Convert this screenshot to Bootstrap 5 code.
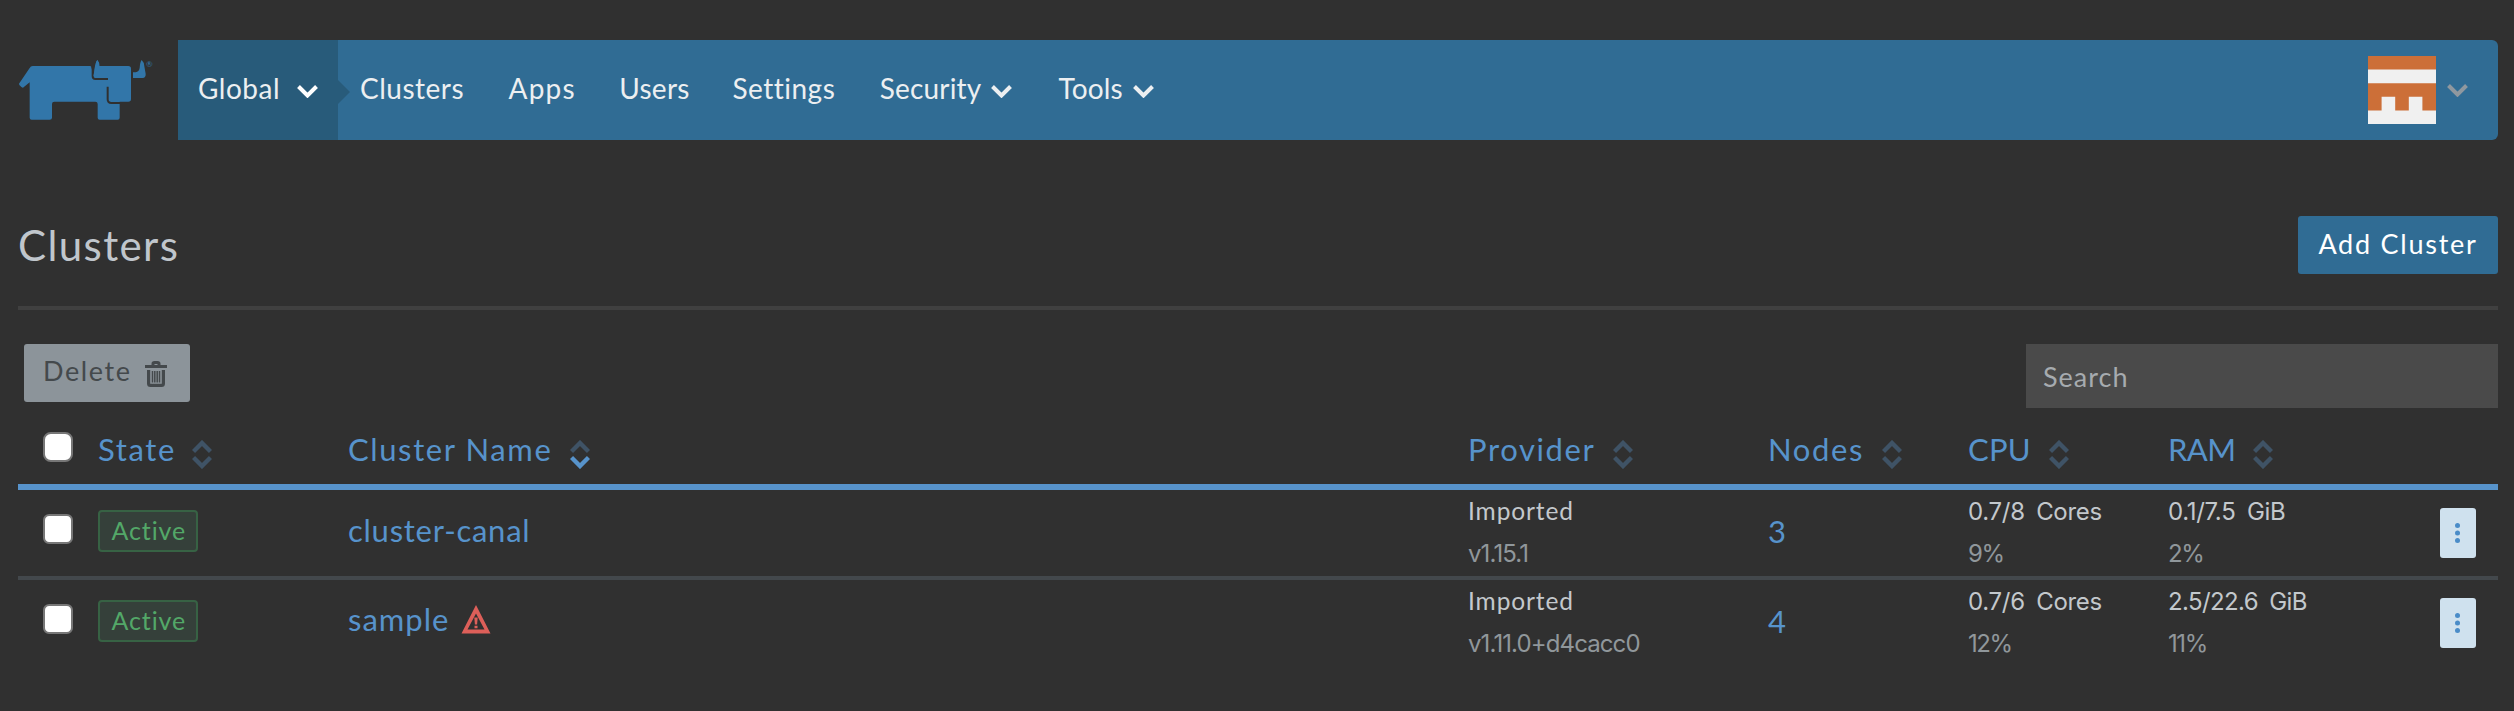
<!DOCTYPE html>
<html lang="en">
<head>
<meta charset="utf-8">
<meta name="viewport" content="width=device-width, initial-scale=1">
<title>Clusters</title>
<link href="https://cdn.jsdelivr.net/npm/bootstrap@5.3.0/dist/css/bootstrap.min.css" rel="stylesheet">
<style>
body{background:#303030;color:#c3c8cc;font-family:Lato,"Liberation Sans",sans-serif;font-size:24.5px;line-height:42px}
.page{padding:40px 16px 0 18px}
.topbar{height:100px}
.topbar .navbar{background:#306c94;border-radius:0 6px 6px 0;color:#eceff1;font-size:28px}
.scope{position:relative;width:160px;background:#285b7a;padding:0 20px 4px 20px}
.scope::after{content:"";position:absolute;left:100%;top:40px;border:12px solid transparent;border-left-color:#285b7a;border-right-width:0}
.menu{display:grid;grid-template-columns:148.6px 110.6px 113.2px 147.4px 178.7px 110px;margin-left:22px;padding-bottom:4px}
.menu a,.scope a{color:inherit;text-decoration:none;white-space:nowrap}
.chev{width:21px;height:13px;fill:none;stroke:currentColor;stroke-width:4}
.menu .chev{margin:0 0 1px 10px}
.scope .chev{margin-top:7px;color:#fff}
.user{padding-right:30px;gap:11px;color:#8f989f}
.ls5{letter-spacing:.5px}.ls12{letter-spacing:1.2px}.ls3{letter-spacing:.3px}.ls2{letter-spacing:.17px}.lsn{letter-spacing:-.6px}
.heading{padding-top:75px;height:170px;border-bottom:4px solid #404040}
.heading h1{font-size:42px;letter-spacing:1.4px;line-height:60px;color:#c0c6cc;font-weight:400;margin:0}
.btn{border:0;border-radius:3px;font-size:27px;line-height:42px;height:58px;padding:7px 20px 9px}
.btn-add,.btn-add:hover{background:#306c94;color:#fff;letter-spacing:1.75px;width:200px;margin-top:1px;padding-left:20px;white-space:nowrap}
.btn-del:disabled{background:#8c949a;color:#44494c;opacity:1;letter-spacing:1.6px;width:166px;padding:0 0 0 19px;margin-left:6px;text-align:left}
.btn-del span{padding-top:6px}
.btn-del svg{margin:17px 0 0 13px}
.search{width:472px;height:64px;background:#4a4a4a!important;border:0;border-radius:0;font-size:27px;padding:0 18px 0 17px;letter-spacing:1px}
.search::placeholder{color:#a6abaf}
.tools{margin-top:34px;height:64px}
.grid{table-layout:fixed;border-collapse:separate;border-spacing:0;margin:0;--bs-table-bg:transparent;--bs-table-color:#c3c8cc;color:#c3c8cc}
.grid>:not(caption)>*>*{padding:0;border:0 solid #43484c;background:none;vertical-align:top;color:inherit;box-shadow:none}
.grid>thead>tr>th{height:82px;border-bottom:6px solid #5793cb;font-weight:400;font-size:31px;color:#5793cb;letter-spacing:1.6px;white-space:nowrap}
.grid>tbody>tr>td{height:90px;border-bottom-width:4px;white-space:nowrap}
.grid>tbody>tr:last-child>td{border-bottom-color:transparent}
.cell{height:86px}
.grid th .cell{height:76px;padding-top:6px}
.sort{width:20px;height:29px;margin:11px 0 0 18px;fill:none;stroke:#3f5366;stroke-width:4.4}
.state-head .sort{margin-left:16px}
.sort .on{stroke:#5793cb}
.form-check-input{width:30px;height:30px;background-color:#fff;border:2px solid #777;border-radius:5px;margin:0 0 8px 25px;float:none;flex:none}
.grid th .form-check-input{margin-bottom:4px}
.state{width:100px;height:42px;border:2px solid #376244;border-radius:4px;background:#35403a;color:#53a868;font-size:25px;line-height:37px;letter-spacing:.9px;padding-left:11.5px;margin-bottom:4px}
.grid a{color:#5793cb;text-decoration:none;font-size:31px}
.cname{margin-bottom:6px;letter-spacing:.75px}
.cname2{margin-bottom:9px;letter-spacing:1px}
.warn{width:30px;height:29px;margin:0 0 7px 12px}
.count{margin-bottom:4px}
.type{letter-spacing:.9px}
.dim{color:#90979b}
.num{font-family:Inter,Lato,sans-serif;font-size:24px;letter-spacing:-.3px;word-spacing:5px;padding-top:1px;height:42px}
.wide{letter-spacing:-.6px}
.ver{letter-spacing:-.9px}
.pct{letter-spacing:-1.4px}
.act{width:36px;height:50px;border-radius:3px;background:#cfe1ee;padding:0;margin-left:72px}
</style>
</head>
<body>
<main class="page">
<header class="topbar d-flex">
<svg class="flex-shrink-0" width="160" height="100" viewBox="24 -30 480 300" aria-label="Rancher">
<path fill="#3276a9" d="M68 48H240Q245 48 245 54L252 72Q256 38 262 30Q268 36 268 48H355Q363 48 363 56V147Q363 155 355 155H329V203Q329 209 323 209H269Q263 209 263 203V162Q263 155 256 155H133Q126 155 126 162V203Q126 209 119 209H65Q59 209 59 203V97L39 113Q36 114 28 105L27 101L59 54Q62 48 68 48Z"/>
<path fill="none" stroke="#303030" stroke-width="6" d="M248 46V79Q248 87 256 87H294M293 110V148Q293 159 304 159H333"/>
<path fill="#303030" d="M245 42H257L251 76Q248 70 245 54Z"/>
<path fill="#3276a9" d="M251 76Q255 36 262 30Q268 36 268 50V84H257Q251 82 251 76Z"/>
<path fill="#3276a9" d="M369 67H377Q387 65 389 54Q390 36 395 30Q402 36 403 49L407 71Q408 83 398 84H369Z"/>
<text x="408" y="50" font-size="24" fill="#3276a9">®</text>
</svg>
<nav class="navbar flex-grow-1 p-0 align-items-stretch justify-content-start">
<div class="scope d-flex align-items-center justify-content-between"><a href="#" class="ls5">Global</a><svg class="chev" viewBox="0 0 21 13"><path d="M1.5 1.5l9 9 9-9"/></svg></div>
<div class="menu align-items-center">
<a href="#" class="ls5">Clusters</a><a href="#" class="ls12">Apps</a><a href="#" class="ls3">Users</a><a href="#" class="ls5">Settings</a>
<a href="#" class="ls2">Security<svg class="chev" viewBox="0 0 21 13"><path d="M1.5 1.5l9 9 9-9"/></svg></a>
<a href="#" class="ls2">Tools<svg class="chev" viewBox="0 0 21 13"><path d="M1.5 1.5l9 9 9-9"/></svg></a>
</div>
<div class="user ms-auto d-flex align-items-center">
<svg width="68" height="68" viewBox="0 0 5 5"><path fill="#f0f0f0" d="M0 0h5v5H0z"/><path fill="#cc6f38" d="M0 0h5v1H0zM0 2h5v2H4V3H3v1H2V3H1v1H0z"/></svg>
<svg class="chev" viewBox="0 0 21 13"><path d="M1.5 1.5l9 9 9-9"/></svg>
</div>
</nav>
</header>
<section class="heading d-flex justify-content-between align-items-start">
<h1>Clusters</h1>
<button class="btn btn-add">Add Cluster</button>
</section>
<div class="tools d-flex justify-content-between align-items-start">
<button class="btn btn-del d-flex align-items-start" disabled><span>Delete</span><svg width="22" height="26" viewBox="0 0 22 26" fill="none" stroke="#44494c"><path stroke-width="3" d="M0 5.5h22M8 4V2.8Q8 1.5 9.5 1.5h3Q14 1.5 14 2.8V4"/><path stroke-width="3.2" d="M3.6 9v13.5q0 1.900 1.900 1.900h11q1.900 0 1.900-1.900V9"/><path stroke-width="1.5" d="M7.500 10v11.500M9.800 10v11.500M12.200 10v11.500M14.500 10v11.500"/></svg></button>
<input class="form-control search" placeholder="Search">
</div>
<table class="table grid">
<colgroup><col style="width:80px"><col style="width:250px"><col style="width:1120px"><col style="width:300px"><col style="width:200px"><col style="width:200px"><col style="width:200px"><col style="width:130px"></colgroup>
<thead><tr>
<th><div class="cell d-flex align-items-center"><input type="checkbox" class="form-check-input"></div></th>
<th><div class="cell state-head d-flex align-items-center">State<svg class="sort" viewBox="0 0 20 29"><path d="M1.500 11.500L10 3l8.500 8.500M1.500 17.500L10 26l8.500-8.500"/></svg></div></th>
<th><div class="cell d-flex align-items-center">Cluster Name<svg class="sort" viewBox="0 0 20 29"><path d="M1.500 11.500L10 3l8.500 8.500"/><path class="on" d="M1.500 17.500L10 26l8.500-8.500"/></svg></div></th>
<th><div class="cell d-flex align-items-center">Provider<svg class="sort" viewBox="0 0 20 29"><path d="M1.500 11.500L10 3l8.500 8.500M1.500 17.500L10 26l8.500-8.500"/></svg></div></th>
<th><div class="cell d-flex align-items-center">Nodes<svg class="sort" viewBox="0 0 20 29"><path d="M1.500 11.500L10 3l8.500 8.500M1.500 17.500L10 26l8.500-8.500"/></svg></div></th>
<th><div class="cell d-flex align-items-center ls2">CPU<svg class="sort" viewBox="0 0 20 29"><path d="M1.500 11.500L10 3l8.500 8.500M1.500 17.500L10 26l8.500-8.500"/></svg></div></th>
<th><div class="cell d-flex align-items-center lsn">RAM<svg class="sort" viewBox="0 0 20 29"><path d="M1.500 11.500L10 3l8.500 8.500M1.500 17.500L10 26l8.500-8.500"/></svg></div></th>
<th></th>
</tr></thead>
<tbody>
<tr>
<td><div class="cell d-flex align-items-center"><input type="checkbox" class="form-check-input"></div></td>
<td><div class="cell d-flex align-items-center"><div class="state">Active</div></div></td>
<td><div class="cell d-flex align-items-center"><a href="#" class="cname">cluster-canal</a></div></td>
<td><div class="type">Imported</div><div class="num ver dim">v1.15.1</div></td>
<td><div class="cell d-flex align-items-center"><a href="#" class="count">3</a></div></td>
<td><div class="num">0.7/8 Cores</div><div class="num pct dim">9%</div></td>
<td><div class="num">0.1/7.5 GiB</div><div class="num pct dim">2%</div></td>
<td><div class="cell d-flex align-items-center"><button class="btn act d-flex align-items-center justify-content-center" aria-label="Actions"><svg width="6" height="22" viewBox="0 0 6 22" fill="#4a8cc8"><circle cx="2.500" cy="3.500" r="2.500"/><circle cx="2.500" cy="11" r="2.500"/><circle cx="2.500" cy="18.500" r="2.500"/></svg></button></div></td>
</tr>
<tr>
<td><div class="cell d-flex align-items-center"><input type="checkbox" class="form-check-input"></div></td>
<td><div class="cell d-flex align-items-center"><div class="state">Active</div></div></td>
<td><div class="cell d-flex align-items-center"><a href="#" class="cname2">sample</a><svg class="warn" viewBox="0 0 30 29"><path fill="#dd5f59" fill-rule="evenodd" d="M15 0L29.500 28.500H.5zM15 8.500L6.500 24.500h17z"/><path fill="#dd5f59" d="M13.300 12.500h3.400l-.6 7h-2.200zM13.500 20.700h3v2.500h-3z"/></svg></div></td>
<td><div class="type">Imported</div><div class="num ver dim">v1.11.0+d4cacc0</div></td>
<td><div class="cell d-flex align-items-center"><a href="#" class="count">4</a></div></td>
<td><div class="num">0.7/6 Cores</div><div class="num pct dim">12%</div></td>
<td><div class="num wide">2.5/22.6 GiB</div><div class="num pct dim">11%</div></td>
<td><div class="cell d-flex align-items-center"><button class="btn act d-flex align-items-center justify-content-center" aria-label="Actions"><svg width="6" height="22" viewBox="0 0 6 22" fill="#4a8cc8"><circle cx="2.500" cy="3.500" r="2.500"/><circle cx="2.500" cy="11" r="2.500"/><circle cx="2.500" cy="18.500" r="2.500"/></svg></button></div></td>
</tr>
</tbody>
</table>
</main>
<script src="https://cdn.jsdelivr.net/npm/bootstrap@5.3.0/dist/js/bootstrap.bundle.min.js"></script>
</body>
</html>
